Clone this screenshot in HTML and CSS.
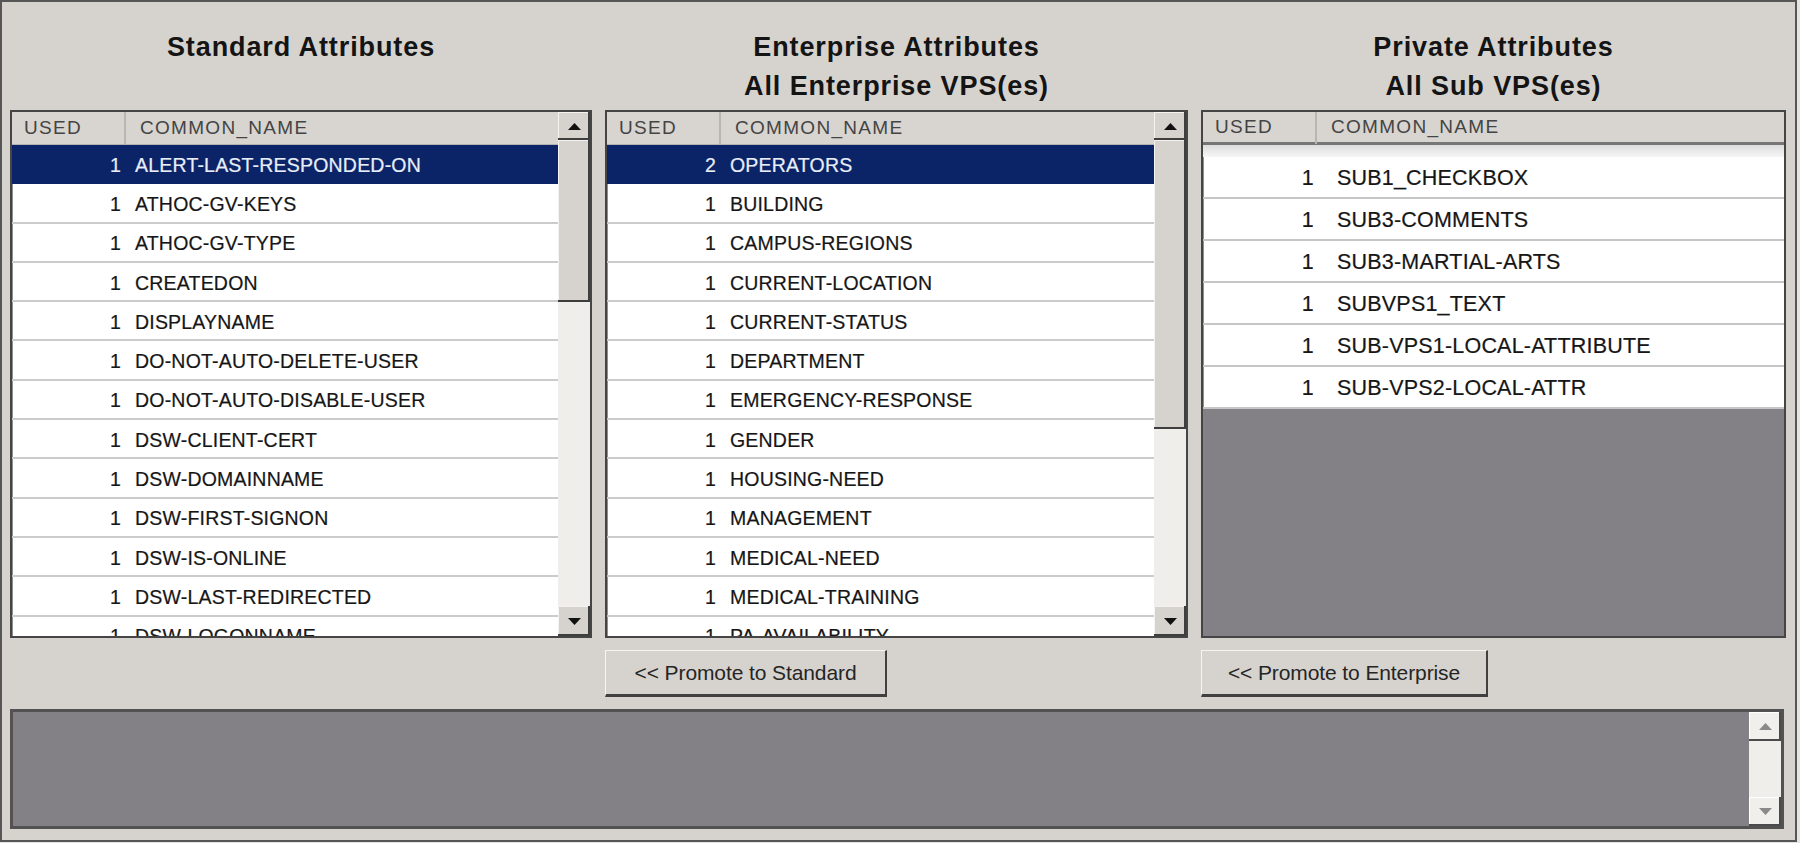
FILE: index.html
```html
<!DOCTYPE html>
<html>
<head>
<meta charset="utf-8">
<title>Attributes</title>
<link rel="stylesheet" href="styles.css">
</head>
<body>
<div class="window">
  <div class="columns">
    <div class="col">
      <div class="col-title">Standard Attributes</div>
      <div class="list">
        <div class="list-body">
          <div class="list-head"><span class="h-used">USED</span><span class="h-name">COMMON_NAME</span></div>
          <div class="row selected"><span class="used">1</span><span class="name">ALERT-LAST-RESPONDED-ON</span></div>
          <div class="row"><span class="used">1</span><span class="name">ATHOC-GV-KEYS</span></div>
          <div class="row"><span class="used">1</span><span class="name">ATHOC-GV-TYPE</span></div>
          <div class="row"><span class="used">1</span><span class="name">CREATEDON</span></div>
          <div class="row"><span class="used">1</span><span class="name">DISPLAYNAME</span></div>
          <div class="row"><span class="used">1</span><span class="name">DO-NOT-AUTO-DELETE-USER</span></div>
          <div class="row"><span class="used">1</span><span class="name">DO-NOT-AUTO-DISABLE-USER</span></div>
          <div class="row"><span class="used">1</span><span class="name">DSW-CLIENT-CERT</span></div>
          <div class="row"><span class="used">1</span><span class="name">DSW-DOMAINNAME</span></div>
          <div class="row"><span class="used">1</span><span class="name">DSW-FIRST-SIGNON</span></div>
          <div class="row"><span class="used">1</span><span class="name">DSW-IS-ONLINE</span></div>
          <div class="row"><span class="used">1</span><span class="name">DSW-LAST-REDIRECTED</span></div>
          <div class="row"><span class="used">1</span><span class="name">DSW-LOGONNAME</span></div>
        </div>
        <div class="vscroll">
          <div class="sb-btn"><svg width="13" height="7" viewBox="0 0 13 7"><polygon points="0,7 6.5,0 13,7" fill="#111"/></svg></div>
          <div class="sb-thumb thumb-std"></div>
          <div class="sb-track"></div>
          <div class="sb-btn sb-down"><svg width="13" height="7" viewBox="0 0 13 7"><polygon points="0,0 13,0 6.5,7" fill="#111"/></svg></div>
        </div>
      </div>
    </div>

    <div class="col">
      <div class="col-title">Enterprise Attributes<br>All Enterprise VPS(es)</div>
      <div class="list">
        <div class="list-body">
          <div class="list-head"><span class="h-used">USED</span><span class="h-name">COMMON_NAME</span></div>
          <div class="row selected"><span class="used">2</span><span class="name">OPERATORS</span></div>
          <div class="row"><span class="used">1</span><span class="name">BUILDING</span></div>
          <div class="row"><span class="used">1</span><span class="name">CAMPUS-REGIONS</span></div>
          <div class="row"><span class="used">1</span><span class="name">CURRENT-LOCATION</span></div>
          <div class="row"><span class="used">1</span><span class="name">CURRENT-STATUS</span></div>
          <div class="row"><span class="used">1</span><span class="name">DEPARTMENT</span></div>
          <div class="row"><span class="used">1</span><span class="name">EMERGENCY-RESPONSE</span></div>
          <div class="row"><span class="used">1</span><span class="name">GENDER</span></div>
          <div class="row"><span class="used">1</span><span class="name">HOUSING-NEED</span></div>
          <div class="row"><span class="used">1</span><span class="name">MANAGEMENT</span></div>
          <div class="row"><span class="used">1</span><span class="name">MEDICAL-NEED</span></div>
          <div class="row"><span class="used">1</span><span class="name">MEDICAL-TRAINING</span></div>
          <div class="row"><span class="used">1</span><span class="name">PA-AVAILABILITY</span></div>
        </div>
        <div class="vscroll">
          <div class="sb-btn"><svg width="13" height="7" viewBox="0 0 13 7"><polygon points="0,7 6.5,0 13,7" fill="#111"/></svg></div>
          <div class="sb-thumb thumb-ent"></div>
          <div class="sb-track"></div>
          <div class="sb-btn sb-down"><svg width="13" height="7" viewBox="0 0 13 7"><polygon points="0,0 13,0 6.5,7" fill="#111"/></svg></div>
        </div>
      </div>
    </div>

    <div class="col">
      <div class="col-title">Private Attributes<br>All Sub VPS(es)</div>
      <div class="list">
        <div class="list-body private">
          <div class="list-head"><span class="h-used">USED</span><span class="h-name">COMMON_NAME</span></div>
          <div class="head-band"></div>
          <div class="row prow"><span class="used">1</span><span class="name">SUB1_CHECKBOX</span></div>
          <div class="row prow"><span class="used">1</span><span class="name">SUB3-COMMENTS</span></div>
          <div class="row prow"><span class="used">1</span><span class="name">SUB3-MARTIAL-ARTS</span></div>
          <div class="row prow"><span class="used">1</span><span class="name">SUBVPS1_TEXT</span></div>
          <div class="row prow"><span class="used">1</span><span class="name">SUB-VPS1-LOCAL-ATTRIBUTE</span></div>
          <div class="row prow"><span class="used">1</span><span class="name">SUB-VPS2-LOCAL-ATTR</span></div>
          <div class="empty"></div>
        </div>
      </div>
    </div>
  </div>

  <div class="actions">
    <div></div>
    <div><button class="btn btn-std">&lt;&lt; Promote to Standard</button></div>
    <div><button class="btn btn-ent">&lt;&lt; Promote to Enterprise</button></div>
  </div>

  <div class="log">
    <div class="log-body"></div>
    <div class="vscroll log-scroll">
      <div class="sb-btn light"><svg width="13" height="7" viewBox="0 0 13 7"><polygon points="0,7 6.5,0 13,7" fill="#8a8a8a"/></svg></div>
      <div class="sb-track"></div>
      <div class="sb-btn light"><svg width="13" height="7" viewBox="0 0 13 7"><polygon points="0,0 13,0 6.5,7" fill="#8a8a8a"/></svg></div>
    </div>
  </div>
</div>
</body>
</html>
```

FILE: styles.css
```css
html, body {
  margin: 0;
  padding: 0;
  background: #e6e4e0;
}

body {
  font-family: "Liberation Sans", Arial, sans-serif;
  color: #1e1e1e;
}

.window {
  width: 1797px;
  height: 842px;
  box-sizing: border-box;
  border: 2px solid #565656;
  background: #d6d3ce;
  padding: 0 10px 11px 8px;
  display: flex;
  flex-direction: column;
}

.columns {
  display: grid;
  grid-template-columns: 582px 583px 585px;
  column-gap: 13px;
}

.col {
  display: flex;
  flex-direction: column;
}

.col-title {
  height: 108px;
  box-sizing: border-box;
  padding-top: 26px;
  text-align: center;
  font-weight: bold;
  font-size: 27px;
  letter-spacing: 0.9px;
  line-height: 39px;
  color: #141414;
}

.list {
  height: 528px;
  box-sizing: border-box;
  border: 2px solid #454545;
  box-shadow: inset 1px 1px 0 #8e8e8e;
  background: #ffffff;
  display: flex;
  overflow: hidden;
}

.list-body {
  flex: 1;
  display: flex;
  flex-direction: column;
  overflow: hidden;
  min-width: 0;
}

.list-head {
  height: 33px;
  flex: none;
  box-sizing: border-box;
  background: #d8d5d0;
  border-bottom: 1px solid #b4b2ae;
  display: flex;
  align-items: center;
  font-size: 19px;
  color: #444;
  letter-spacing: 1.3px;
}

.h-used {
  width: 102px;
  padding-left: 12px;
  position: relative;
}

.h-used::after {
  content: "";
  position: absolute;
  right: 0;
  top: -6px;
  bottom: -6px;
  width: 2px;
  background: #b8b6b2;
}

.h-name {
  padding-left: 14px;
}

.row {
  height: 39.3px;
  flex: none;
  box-sizing: border-box;
  padding-top: 3px;
  border-bottom: 2px solid #cbcbcb;
  display: flex;
  align-items: center;
  font-size: 19.5px;
  letter-spacing: 0.2px;
  color: #161616;
  -webkit-text-stroke: 0.2px currentColor;
  white-space: nowrap;
}

.row .used {
  width: 109px;
  text-align: right;
  flex: none;
}

.row .name {
  padding-left: 14px;
}

.row.selected {
  background: #0b2468;
  border-bottom-color: #0b2468;
  color: #e9edf8;
}

.private .list-head {
  border-bottom: 3px solid #767676;
}

.head-band {
  height: 12px;
  flex: none;
  background: linear-gradient(#dcdcdc, #f6f6f6);
}

.row.prow {
  height: 42px;
  padding-top: 2px;
  font-size: 21.5px;
  letter-spacing: 0.2px;
  border-bottom-color: #c6c6c6;
}

.row.prow .used {
  width: 111px;
}

.row.prow .name {
  padding-left: 23px;
}

.empty {
  flex: 1;
  background: #838086;
}

.vscroll {
  width: 32px;
  flex: none;
  display: flex;
  flex-direction: column;
  background: #efeeea;
}

.sb-btn {
  height: 28px;
  flex: none;
  box-sizing: border-box;
  background: #d6d3ce;
  box-shadow: inset -2px -2px 0 #3e3e3e, inset 1px 1px 0 #f4f3f0;
  display: flex;
  align-items: center;
  justify-content: center;
}

.sb-down {
  height: 30px;
}

.sb-thumb {
  flex: none;
  background: #d6d3ce;
  box-shadow: inset -2px -2px 0 #3e3e3e, inset 1px 1px 0 #f4f3f0;
}

.thumb-std {
  height: 162px;
}

.thumb-ent {
  height: 289px;
}

.sb-track {
  flex: 1;
}

.actions {
  display: grid;
  grid-template-columns: 582px 583px 585px;
  column-gap: 13px;
  margin-top: 12px;
  height: 47px;
}

.btn {
  height: 47px;
  box-sizing: border-box;
  background: #d6d3ce;
  border: none;
  border-top: 1px solid #f6f5f2;
  border-left: 1px solid #f6f5f2;
  border-right: 2px solid #404040;
  border-bottom: 3px solid #404040;
  font-family: "Liberation Sans", Arial, sans-serif;
  font-size: 21px;
  letter-spacing: -0.1px;
  color: #252525;
  padding: 0;
  margin: 0;
}

.btn-std {
  width: 282px;
}

.btn-ent {
  width: 287px;
}

.log {
  margin-top: 12px;
  height: 120px;
  box-sizing: border-box;
  border: 3px solid #525252;
  background: #838086;
  display: flex;
  margin-right: 1px;
}

.log-body {
  flex: 1;
}

.log-scroll .sb-btn.light {
  height: 29px;
  background: #f0efec;
  box-shadow: inset -2px -2px 0 #4a4a4a, inset 1px 1px 0 #ffffff;
}
```
